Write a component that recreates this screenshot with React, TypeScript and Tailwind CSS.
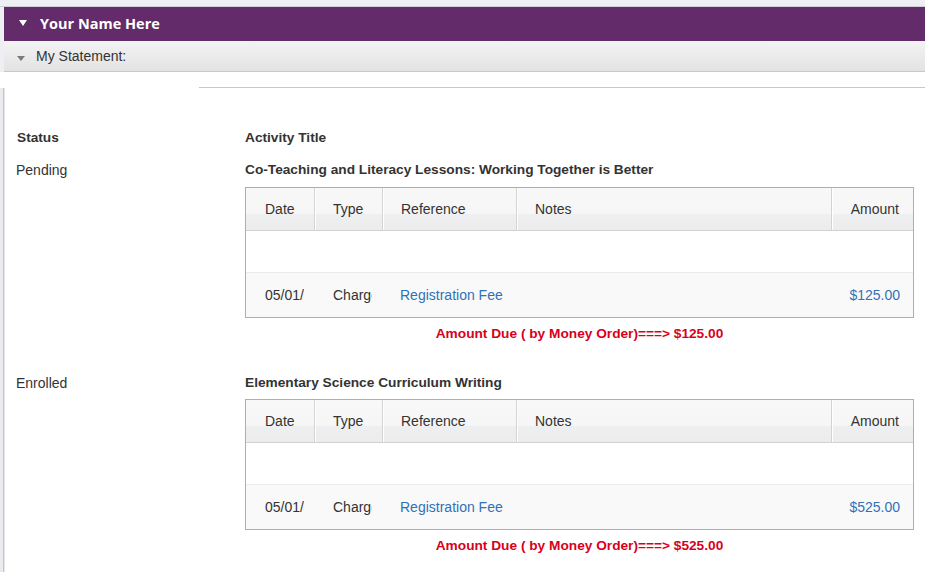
import React from "react";

type Entry = {
  status: string;
  title: string;
  date: string;
  type: string;
  reference: string;
  amount: string;
};

const entries: Entry[] = [
  {
    status: "Pending",
    title: "Co-Teaching and Literacy Lessons: Working Together is Better",
    date: "05/01/2017",
    type: "Charge",
    reference: "Registration Fee",
    amount: "$125.00",
  },
  {
    status: "Enrolled",
    title: "Elementary Science Curriculum Writing",
    date: "05/01/2017",
    type: "Charge",
    reference: "Registration Fee",
    amount: "$525.00",
  },
];

const headCell =
  "h-[42px] flex items-center border-r border-r-[#d3d3d3] border-l border-l-white bg-[linear-gradient(to_bottom,#f8f8f8_0%,#f6f6f6_62%,#eeeff0_62%,#ececed_100%)]";

function StatementTable({ e }: { e: Entry }) {
  return (
    <div className="w-[669px] p-[1px] bg-[#8fb3e6]">
      <div className="bg-white">
        <div className="flex border-b border-[#d2d2d2]">
          <div className={`${headCell} w-[69px] pl-[19px] border-l-0`}>Date</div>
          <div className={`${headCell} w-[68px] pl-[17px]`}>Type</div>
          <div className={`${headCell} w-[134px] pl-[17px]`}>Reference</div>
          <div className={`${headCell} w-[315px] pl-[17px]`}>Notes</div>
          <div className={`${headCell} flex-1 justify-end pr-[14px] border-r-0`}>Amount</div>
        </div>
        <div className="h-[42px] bg-white border-b border-[#ececec]" />
        <div className="h-[44px] bg-[#f9f9f9] flex items-center">
          <div className="w-[69px] pl-[19px]">
            <div className="w-[39px] overflow-hidden whitespace-nowrap">{e.date}</div>
          </div>
          <div className="w-[68px] pl-[18px]">
            <div className="w-[39px] overflow-hidden whitespace-nowrap">{e.type}</div>
          </div>
          <div className="w-[134px] pl-[17px] text-[#2f72b8] whitespace-nowrap">{e.reference}</div>
          <div className="w-[315px]" />
          <div className="flex-1 text-right pr-[13px] text-[#2f72b8]">{e.amount}</div>
        </div>
      </div>
    </div>
  );
}

export default function App() {
  return (
    <div
      className="w-[925px] h-[572px] overflow-hidden bg-white text-[#333] text-[14px]"
      style={{ fontFamily: '"Liberation Sans", Arial, sans-serif' }}
    >
      <div className="h-[7px] bg-[#eeeff3] border-b border-[#cfcfd2]" />
      <div className="bg-[#eeeff3] pl-[4px]">
        <div className="h-[34px] bg-[#632b6a] flex items-center">
          <svg width="10" height="6" viewBox="0 0 10 6" className="ml-[14px] mr-[12px] mt-[-2px]">
            <path d="M1 0 L9 0 L5 6 Z" fill="#ffffff" />
          </svg>
          <span
            className="text-white font-bold text-[14.5px]"
            style={{ fontFamily: '"Open Sans", "Liberation Sans", sans-serif' }}
          >
            Your Name Here
          </span>
        </div>
        <div className="h-[31px] flex items-center border-b border-[#c9c9c9] bg-[linear-gradient(to_bottom,#f3f3f3,#e3e3e3)]">
          <svg width="10" height="6" viewBox="0 0 10 6" className="ml-[12px] mr-[10px] mt-[5px]">
            <path d="M1 0 L9 0 L5 5 Z" fill="#7a7a7a" />
          </svg>
          <span className="text-[14px] text-[#333]">My Statement:</span>
        </div>
      </div>
      <div className="flex h-[16px]">
        <div className="w-[199px] bg-white" />
        <div className="flex-1 border-b border-[#c8c8c8]" />
      </div>
      <div className="flex h-full">
        <div className="w-[3px] bg-[#eaebef]" />
        <div className="w-[1px] bg-[#c6c6c6]" />
        <div className="w-[1px] bg-[#e4e4e4]" />
        <div className="flex-1 pt-[41px]">
          <div className="flex font-bold text-[13.7px] leading-[18px]">
            <div className="w-[240px] pl-[12px]">Status</div>
            <div>Activity Title</div>
          </div>
          {entries.map((e, i) => (
            <div key={i} className={`flex ${i === 0 ? "mt-[14px]" : "mt-[16px]"}`}>
              <div className="w-[240px] pl-[11px] leading-[18px]">{e.status}</div>
              <div className="flex flex-col">
                <div className={`font-bold text-[13.7px] leading-[18px] ${i === 0 ? "mb-[8px]" : "mb-[7px]"}`}>{e.title}</div>
                <StatementTable e={e} />
                <div className="w-[669px] text-center text-[#d9001b] font-bold text-[13.7px] leading-[18px] mt-[7px] mb-[15px]">
                  Amount Due ( by Money Order)===&gt; {e.amount}
                </div>
              </div>
            </div>
          ))}
        </div>
      </div>
    </div>
  );
}
